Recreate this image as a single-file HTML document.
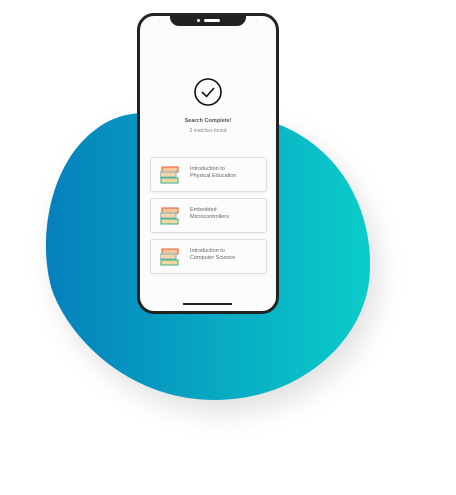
<!DOCTYPE html>
<html><head><style>
html,body{margin:0;padding:0;background:#fff;width:456px;height:495px;overflow:hidden;font-family:"Liberation Sans",sans-serif}
.phone{position:absolute;left:137px;top:13px;width:136px;height:295px;border:3px solid #222;border-radius:17px;background:#fbfcfb}
.notch{position:absolute;left:30px;top:-1px;width:76px;height:11px;background:#222;border-radius:0 0 9px 9px}
.notch i{position:absolute;top:4px;height:3px;background:#fff;border-radius:2px}
.card{position:absolute;left:10px;width:115px;height:33px;border:1px solid #ddd;border-radius:3px;background:#fcfcfc;box-shadow:0 1px 2px rgba(0,0,0,.05)}
.card .t{position:absolute;left:39px;top:8px;font-size:5.5px;line-height:7px;color:#666}
.bk{position:absolute;left:9px;top:8px;width:20px;height:18px}
</style></head><body>
<svg width="456" height="495" style="position:absolute;left:0;top:0">
<defs>
<linearGradient id="g" x1="0" x2="1" y1="0" y2="0"><stop offset="0" stop-color="#0580bd"/><stop offset="1" stop-color="#0acdc9"/></linearGradient>
<filter id="s" x="-30%" y="-30%" width="160%" height="160%"><feGaussianBlur stdDeviation="14"/></filter>
</defs>
<path d="M140,113 C200,108 260,110 300,135 C350,165 372,220 370,270 C368,340 300,400 215,400 C130,400 70,340 52,290 C40,250 45,190 75,150 C95,125 115,115 140,113 Z" fill="#000" opacity=".12" filter="url(#s)" transform="translate(8,12)"/>
<path d="M140,113 C200,108 260,110 300,135 C350,165 372,220 370,270 C368,340 300,400 215,400 C130,400 70,340 52,290 C40,250 45,190 75,150 C95,125 115,115 140,113 Z" fill="url(#g)"/>
</svg>
<div class="phone">
<div class="notch"><i style="left:27px;width:3px"></i><i style="left:34px;width:16px"></i></div>
<svg style="position:absolute;left:53px;top:61px" width="30" height="30"><circle cx="15" cy="15" r="13" fill="none" stroke="#111" stroke-width="1.6"/><path d="M9,15 L13.5,19.5 L21,11" fill="none" stroke="#111" stroke-width="1.6"/></svg>
<div style="position:absolute;left:0;width:136px;top:102px;text-align:center;font-size:5.5px;font-weight:bold;color:#555">Search Complete!</div>
<div style="position:absolute;left:0;width:136px;top:112px;text-align:center;font-size:5px;color:#888">3 matches found</div>
<div class="card" style="top:141px"><svg class="bk"><rect x="2" y="1" width="16" height="5" fill="#f5c79a" stroke="#f2572a" stroke-width="1"/><rect x="0" y="6" width="16" height="5" fill="#f4d4a8" stroke="#79b9bc" stroke-width="1"/><rect x="1" y="12" width="17" height="5" fill="#f6d9a0" stroke="#2fb487" stroke-width="1"/></svg><div class="t">Introduction to<br>Physical Education</div></div>
<div class="card" style="top:182px"><svg class="bk"><rect x="2" y="1" width="16" height="5" fill="#f5c79a" stroke="#f2572a" stroke-width="1"/><rect x="0" y="6" width="16" height="5" fill="#f4d4a8" stroke="#79b9bc" stroke-width="1"/><rect x="1" y="12" width="17" height="5" fill="#f6d9a0" stroke="#2fb487" stroke-width="1"/></svg><div class="t">Embedded<br>Microcontrollers</div></div>
<div class="card" style="top:223px"><svg class="bk"><rect x="2" y="1" width="16" height="5" fill="#f5c79a" stroke="#f2572a" stroke-width="1"/><rect x="0" y="6" width="16" height="5" fill="#f4d4a8" stroke="#79b9bc" stroke-width="1"/><rect x="1" y="12" width="17" height="5" fill="#f6d9a0" stroke="#2fb487" stroke-width="1"/></svg><div class="t">Introduction to<br>Computer Science</div></div>
<div style="position:absolute;left:43px;top:287px;width:49px;height:1.5px;background:#222"></div>
</div>
</body></html>
